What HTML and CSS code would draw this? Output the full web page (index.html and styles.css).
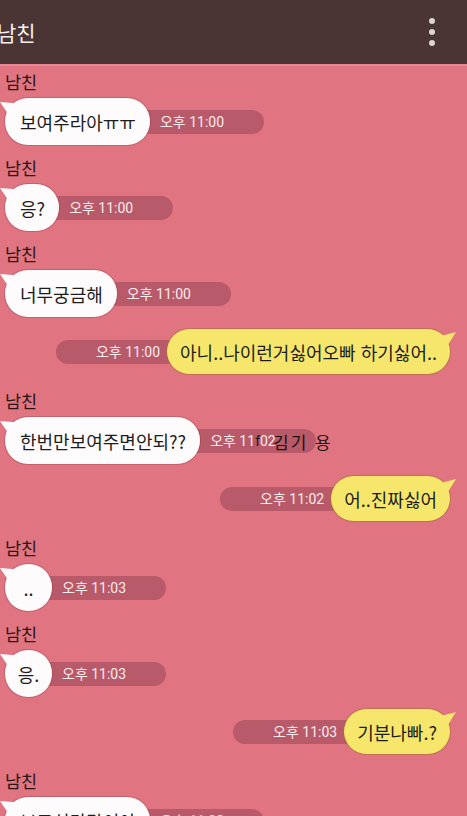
FILE: index.html
```html
<!DOCTYPE html>
<html lang="ko">
<head>
<meta charset="utf-8">
<title>남친</title>
<link rel="stylesheet" href="styles.css">
</head>
<body>
<header class="top">
  <span class="title">남친</span>
  <span class="kebab"><i></i><i></i><i></i></span>
</header>
<main class="chat">
  <div class="msg in">
    <div class="name">남친</div>
    <div class="line"><div class="bubble">보여주라아ㅠㅠ</div><div class="time">오후 11:00</div></div>
  </div>
  <div class="msg in">
    <div class="name">남친</div>
    <div class="line"><div class="bubble">응?</div><div class="time">오후 11:00</div></div>
  </div>
  <div class="msg in">
    <div class="name">남친</div>
    <div class="line"><div class="bubble">너무궁금해</div><div class="time">오후 11:00</div></div>
  </div>
  <div class="msg out">
    <div class="line"><div class="time">오후 11:00</div><div class="bubble">아니..나이런거싫어오빠 하기싫어..</div></div>
  </div>
  <div class="msg in">
    <div class="name">남친</div>
    <div class="line mark"><div class="bubble">한번만보여주면안되??</div><div class="time">오후 11<span class="ink">f</span>02</div><span class="sign">김기 용</span></div>
  </div>
  <div class="msg out">
    <div class="line"><div class="time">오후 11:02</div><div class="bubble">어..진짜싫어</div></div>
  </div>
  <div class="msg in">
    <div class="name">남친</div>
    <div class="line"><div class="bubble round">..</div><div class="time">오후 11:03</div></div>
  </div>
  <div class="msg in">
    <div class="name">남친</div>
    <div class="line"><div class="bubble round">응.</div><div class="time">오후 11:03</div></div>
  </div>
  <div class="msg out">
    <div class="line"><div class="time">오후 11:03</div><div class="bubble">기분나빠.?</div></div>
  </div>
  <div class="msg in">
    <div class="name">남친</div>
    <div class="line"><div class="bubble">보고싶단말이야</div><div class="time">오후 11:03</div></div>
  </div>
</main>
</body>
</html>
```
FILE: styles.css
```css
html, body {
  margin: 0;
  padding: 0;
}
body {
  width: 467px;
  height: 816px;
  overflow: hidden;
  background: #e07480;
  font-family: "Noto Sans CJK KR", "Noto Sans", sans-serif;
  color: #1e1414;
}
.top {
  height: 64px;
  background: #4a3434;
  border-bottom: 2px solid #e98793;
  display: flex;
  align-items: center;
  justify-content: space-between;
}
.title {
  color: #f4eeee;
  font-size: 21px;
  margin-left: -3px;
  line-height: 1;
}
.kebab {
  display: flex;
  flex-direction: column;
  gap: 5px;
  margin-right: 32px;
}
.kebab i {
  display: block;
  width: 6px;
  height: 6px;
  border-radius: 50%;
  background: #dcd6d6;
}
.chat {
  display: flex;
  flex-direction: column;
  gap: 12px;
  padding: 5px 17px 0 5px;
}
.msg {
  display: flex;
  flex-direction: column;
}
.msg.out {
  align-items: flex-end;
  margin-bottom: 4px;
}
.name {
  font-size: 17.5px;
  line-height: 22px;
  margin-bottom: 5px;
  color: #2a1416;
}
.line {
  display: flex;
  align-items: center;
  position: relative;
}
.bubble {
  position: relative;
  z-index: 2;
  height: 47px;
  box-sizing: border-box;
  display: flex;
  align-items: center;
  justify-content: center;
  font-size: 18px;
  padding: 0 14px 0 15px;
  border-radius: 23px;
  white-space: nowrap;
  color: #1d1d1d;
}
.in .bubble {
  background: #fdfbfb;
  box-shadow: 0 0 0 1px rgba(150, 60, 72, 0.35);
}
.in .bubble::before {
  content: "";
  position: absolute;
  left: -5px;
  top: 4px;
  width: 16px;
  height: 13px;
  background: #fdfbfb;
  clip-path: polygon(0 0, 100% 10%, 100% 70%, 55% 100%);
}
.bubble.round {
  min-width: 47px;
  padding: 0 10px;
}
.out .bubble {
  height: 45px;
  background: #f6e76c;
  box-shadow: 0 0 0 1px rgba(170, 110, 50, 0.55);
  padding: 0 13px 0 13px;
}
.out .bubble::after {
  content: "";
  position: absolute;
  right: -6px;
  top: 3px;
  width: 17px;
  height: 15px;
  background: #f6e76c;
  clip-path: polygon(0 30%, 100% 0, 45% 100%, 0 100%);
}
.time {
  position: relative;
  z-index: 1;
  height: 24px;
  line-height: 24px;
  border-radius: 12px;
  background: #b85a69;
  color: #fbeced;
  font-family: Roboto, "Noto Sans CJK KR", sans-serif;
  font-size: 14px;
  white-space: nowrap;
}
.in .time {
  margin-left: -20px;
  padding: 0 40px 0 30px;
}
.out .time {
  margin-right: -12px;
  padding: 0 19px 0 40px;
}
.ink {
  color: #221416;
}
.sign {
  position: absolute;
  z-index: 3;
  left: 268px;
  top: 50%;
  transform: translateY(-50%);
  font-family: "Noto Sans CJK KR", sans-serif;
  font-size: 17px;
  letter-spacing: 2px;
  color: #1a1212;
  line-height: 1;
}
```
